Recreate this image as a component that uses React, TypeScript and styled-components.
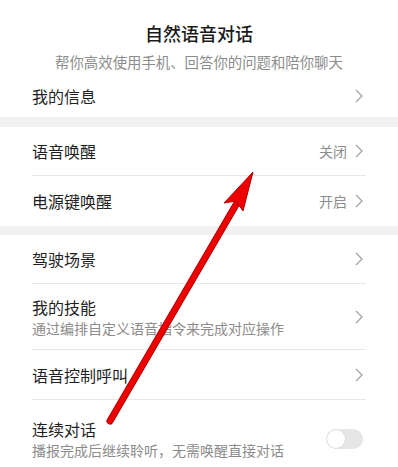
import * as React from "react"
import styled, { createGlobalStyle } from "styled-components"

const GlobalStyle = createGlobalStyle`
    html, body {
        margin: 0;
        padding: 0;
        background: #ffffff;
    }
    body {
        font-family: "Noto Sans CJK SC", "Noto Sans", sans-serif;
        color: #1a1a1a;
    }
`

const Page = styled.div`
    position: relative;
    width: 398px;
    height: 467px;
    overflow: hidden;
    background: #ffffff;
`

const Header = styled.div`
    display: flex;
    flex-direction: column;
    align-items: center;
    padding: 20px 0 2px;
`

const Title = styled.div`
    font-size: 18px;
    line-height: 26px;
    font-weight: 500;
    color: #1a1a1a;
`

const Subtitle = styled.div`
    margin-top: 6px;
    font-size: 14.4px;
    line-height: 20px;
    color: #8c8c8c;
`

const Band = styled.div<{ $h: number }>`
    height: ${p => p.$h}px;
    background: #f1f1f1;
`

const Row = styled.div<{ $h: number; $divider?: boolean }>`
    display: flex;
    align-items: center;
    height: ${p => p.$h}px;
    margin: 0 32px;
    border-top: ${p => (p.$divider ? "1px solid #e8e8e8" : "none")};
`

const Texts = styled.div`
    flex: 1;
    display: flex;
    flex-direction: column;
`

const Label = styled.div`
    font-size: 16px;
    line-height: 22px;
    color: #1f1f1f;
`

const Desc = styled.div`
    font-size: 14px;
    line-height: 20px;
    color: #8c8c8c;
`

const Value = styled.span`
    font-size: 14px;
    color: #8c8c8c;
    margin-right: 8px;
`

const Toggle = styled.div`
    position: relative;
    width: 37px;
    height: 20px;
    border-radius: 10px;
    background: #e6e6e6;
    margin-right: 3px;

    &::after {
        content: "";
        position: absolute;
        left: 1px;
        top: 1px;
        width: 18px;
        height: 18px;
        border-radius: 50%;
        background: #ffffff;
        box-shadow: 0 0 0 0.5px #d8d8d8;
    }
`

const Overlay = styled.svg`
    position: absolute;
    left: 0;
    top: 0;
    pointer-events: none;
`

const Chevron = () => (
    <svg width="8" height="14" viewBox="0 0 8 14" style={{ marginRight: 3 }}>
        <polyline points="1,1 7,7 1,13" fill="none" stroke="#a3a3a3" strokeWidth="1.3" />
    </svg>
)

interface ItemProps {
    label: string
    desc?: string
    value?: string
    h: number
    divider?: boolean
    toggle?: boolean
}

const Item: React.FC<ItemProps> = ({ label, desc, value, h, divider, toggle }) => (
    <Row $h={h} $divider={divider}>
        <Texts>
            <Label>{label}</Label>
            {desc && <Desc>{desc}</Desc>}
        </Texts>
        {value && <Value>{value}</Value>}
        {toggle ? <Toggle /> : <Chevron />}
    </Row>
)

export default function App() {
    return (
        <Page>
            <GlobalStyle />
            <Header>
                <Title>自然语音对话</Title>
                <Subtitle>帮你高效使用手机、回答你的问题和陪你聊天</Subtitle>
            </Header>
            <Item label="我的信息" h={43} />
            <Band $h={10} />
            <Item label="语音唤醒" value="关闭" h={48} />
            <Item label="电源键唤醒" value="开启" h={50} divider />
            <Band $h={9} />
            <Item label="驾驶场景" h={48} />
            <Item label="我的技能" desc="通过编排自定义语音指令来完成对应操作" h={65} divider />
            <Item label="语音控制呼叫" h={49} divider />
            <Item label="连续对话" desc="播报完成后继续聆听，无需唤醒直接对话" h={78} divider toggle />
            <Overlay width="398" height="467" viewBox="0 0 398 467">
                <line x1="110" y1="421" x2="237" y2="203" stroke="#b30000" strokeWidth="7" strokeLinecap="round" />
                <line x1="110" y1="421" x2="237" y2="203" stroke="#ee0000" strokeWidth="5" strokeLinecap="round" />
                <polygon points="253,172 243,211 236,201 224,203" fill="#ee0000" stroke="#b30000" strokeWidth="1" strokeLinejoin="round" />
            </Overlay>
        </Page>
    )
}
